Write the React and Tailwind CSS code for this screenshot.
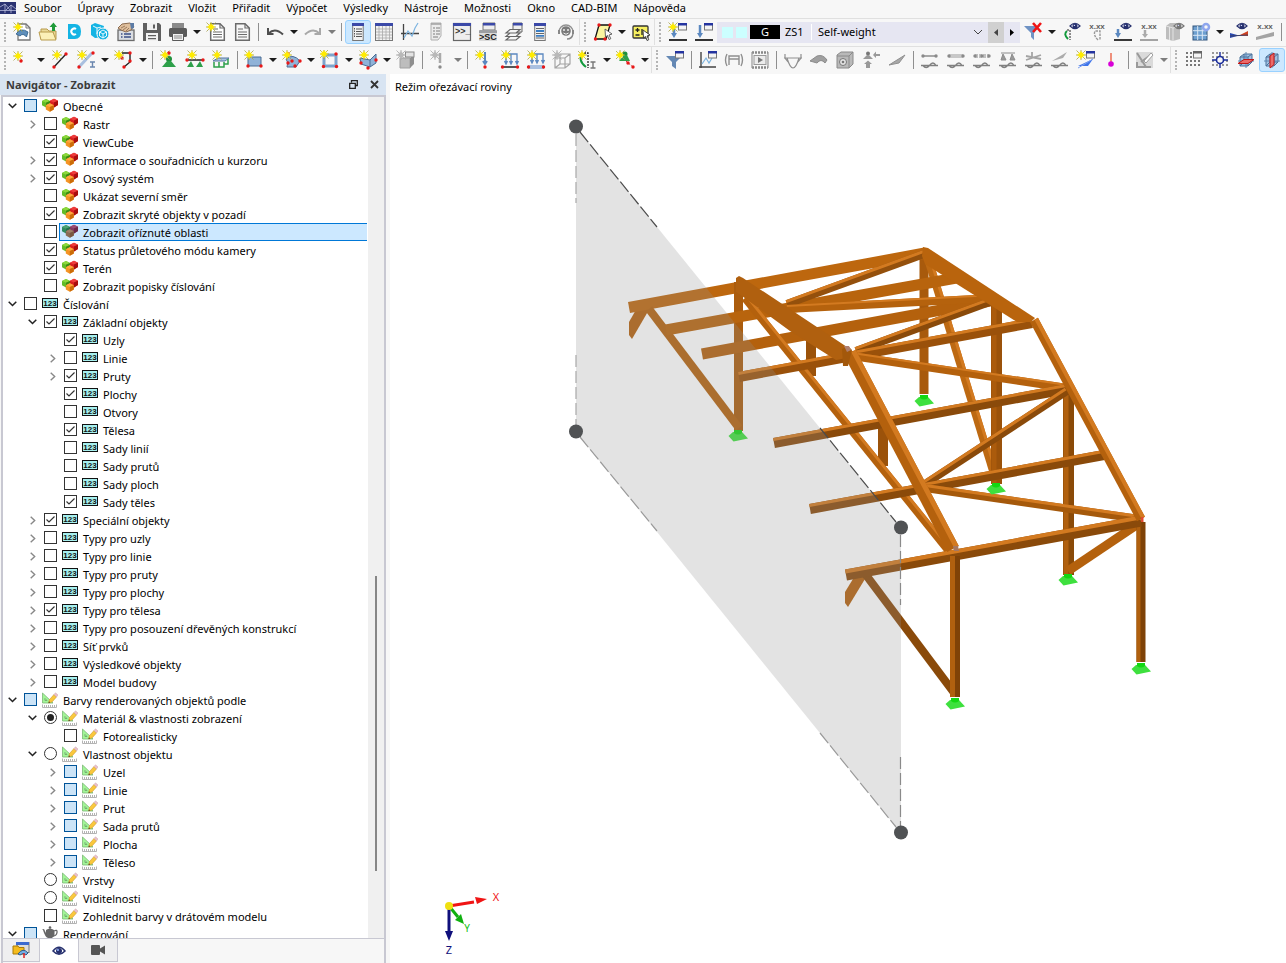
import { Fragment } from "react"
import clsx from "clsx"

const MENU = [
  "Soubor", "Úpravy", "Zobrazit", "Vložit", "Přiřadit", "Výpočet", "Výsledky",
  "Nástroje", "Možnosti", "Okno", "CAD-BIM", "Nápověda",
]

/* ---------- small parts shared by the toolbar icons ---------- */

function Star({ x = 5, y = 5, gray }) {
  return (
    <g transform={`translate(${x} ${y})`}>
      <path d="M-4.500 -4.500L4.500 4.500M4.500 -4.500L-4.500 4.500M0 -5V5M-5 0H5" stroke={gray ? "#a8a8a8" : "#a39f4a"} strokeWidth=".8" />
      <path
        d="M0 -4.500L1 -2L3 -3L2 -1L4.500 0L2 1L3 3L1 2L0 4.500L-1 2L-3 3L-2 1L-4.500 0L-2 -1L-3 -3L-1 -2Z"
        fill={gray ? "#b8b8b8" : "#ffec00"}
      />
    </g>
  )
}

function Dots({ at, gray }) {
  return at.map(([x, y]) => <circle key={`${x}-${y}`} cx={x} cy={y} r="1.700" fill={gray ? "#8a8a8a" : "#e81818"} />)
}

function Win({ x = 10, y = 1, gray }) {
  return (
    <g transform={`translate(${x} ${y})`}>
      <rect x=".5" y=".5" width="8" height="6.500" fill="#f4f4f4" stroke="#777" />
      <rect width="9" height="2.500" fill={gray ? "#666" : "#2434a0"} />
    </g>
  )
}

function Eye({ x = 13, y = 5, gray }) {
  return (
    <g transform={`translate(${x} ${y})`}>
      <path d="M-5 0Q0 -5.500 5 0Q0 5 -5 0Z" fill="#fff" stroke={gray ? "#777" : "#26306e"} strokeWidth="1.200" />
      <circle r="2.500" fill={gray ? "#777" : "#26306e"} />
      <circle cx="-.6" cy="-.6" r=".7" fill="#cfd6ff" />
    </g>
  )
}

const Xxx = () => (
  <text x="10" y="6.500" textAnchor="middle" fontFamily="Liberation Sans" fontSize="8" fontWeight="bold" fill="#606060">x.xx</text>
)

const Wave = () => (
  <path d="M1 15.500H18M3 15.500Q6 19.500 9.500 15.500Q13 10.500 16 15.500" fill="none" stroke="#808080" strokeWidth="1.400" />
)

const Page = ({ x = 3, fill = "#fff" }) => (
  <g transform={`translate(${x} 1)`}>
    <path d="M.7 .7H10L14.300 5V17.300H.7Z" fill={fill} stroke="#6b6b6b" strokeWidth="1.500" />
    <path d="M10 .7V5H14M3 6H8M3 9H12M3 11.500H12M3 14H12" fill="none" stroke="#6b6b6b" strokeWidth="1.200" />
  </g>
)

const Cross = ({ children }) => (
  <>
    <path d="M4 7L8 4H16V12L12 16H4Z" fill="#9fc0e2" stroke="#4a7199" />
    <path d="M4 7H12L16 4M12 7V16M8 4V12H16M8 12L4 16" fill="none" stroke="#4a7199" />
    <path d="M2 11H18M10 2V18" stroke="#5f88b3" />
    {children}
  </>
)

const ICONS = {
  newModel: (
    <>
      <path d="M6 2H14L18 6V18H6Z" fill="#fff" stroke="#777" strokeWidth="1.300" />
      <path d="M14 2V6H18" fill="none" stroke="#777" />
      <path d="M4 12Q9 5 16 10L14.500 15Q11 10.500 8 14Z" fill="#5f8fbb" stroke="#2d5d88" strokeWidth=".8" />
      <Star x={6} y={5} />
    </>
  ),
  open: (
    <>
      <path d="M3 7H9L11 9H18V17H3Z" fill="#e9d998" stroke="#b89b4c" />
      <path d="M1 10H15L18 18H3Z" fill="#fbf0b8" stroke="#b89b4c" />
      <path d="M14 9V5H11.500L15.500 .5L19 5H17V9Z" fill="#1f9b3a" />
    </>
  ),
  cloud: (
    <>
      <path d="M4 2H11Q17 2 17 9.500T11 17H4Z" fill="#14b4e4" />
      <path d="M12 7A3 3 0 1 0 12 12" fill="none" stroke="#fff" strokeWidth="2" />
    </>
  ),
  cloudCube: (
    <>
      <path d="M1 3L5 1L14 4L13 9L17 15L5 16L1 13Z" fill="#14b4e4" />
      <circle cx="13" cy="12" r="6" fill="#14b4e4" stroke="#f7f7f7" />
      <path d="M13 8L16.500 10V14L13 16L9.500 14V10ZM9.500 10L13 12L16.500 10M13 12V16M3 4L7 6V12M7 6L11 5" fill="none" stroke="#fff" strokeWidth=".9" />
    </>
  ),
  handDoc: (
    <>
      <rect x="2" y="8" width="16" height="10.500" fill="#dadde2" stroke="#6b6b6b" strokeWidth="1.300" />
      <path d="M5 12H6.500M8 12H15M5 15H6.500M8 15H15" stroke="#3d4f86" strokeWidth="1.500" />
      <path d="M2 6L6 2L14 1L18 4L15 8L10 10L5 8Z" fill="#dfbf9c" stroke="#8b6a4e" />
      <path d="M5 6L9 4M7 8L11 5M10 9L13 6" stroke="#8b6a4e" strokeWidth=".8" />
      <path d="M14 1L18 1V6L15 7Z" fill="#5d7ca6" />
    </>
  ),
  save: (
    <>
      <path d="M1 1H17L19 3V19H1Z" fill="#606060" />
      <path d="M5 1H15V8H5ZM4 11H16V19H4Z" fill="#f2f2f2" />
      <path d="M11 2.500H13V6.500H11ZM6 13H14V14.300H6ZM6 16H14V17.300H6Z" fill="#606060" />
    </>
  ),
  print: (
    <>
      <path d="M4 1H16V6H4Z" fill="#8a8a8a" />
      <rect x="1" y="6" width="18" height="9" rx="1.500" fill="#5a5a5a" />
      <path d="M4.500 11.500H15.500V18.500H4.500Z" fill="#f2f2f2" stroke="#5a5a5a" />
      <path d="M6 14H14M6 16H14" stroke="#888" />
    </>
  ),
  newDoc: (<><Page x={4} /><Star x={5} y={5} /></>),
  doc: <Page x={3} fill="#f7f7f7" />,
  undo: <path d="M3 6V12H8.500M3.500 11.500Q10 5 18 12.500" fill="none" stroke="#4f4f4f" strokeWidth="2" />,
  redo: <path d="M17 6V12H11.500M16.500 11.500Q10 5 2 12.500" fill="none" stroke="#a8a8a8" strokeWidth="2" />,
  navigator: (
    <>
      <rect x="4.700" y="2" width="10.500" height="16.500" fill="#f2f2f2" stroke="#777" />
      <rect x="4" y="1" width="12" height="3" fill="#3b49a8" />
      <path d="M8 7H14M8 9.500H14M8 12H14M8 14.500H14" stroke="#555" strokeWidth="1.200" />
      <path d="M6.500 6V16" stroke="#555" strokeDasharray="1.500 1" />
    </>
  ),
  table: (
    <>
      <rect x="1.500" y="1.500" width="17" height="17" fill="#f2f2f2" stroke="#777" />
      <path d="M5 4V18M8.500 4V18M12 4V18M15.500 4V18M2 7H18M2 10H18M2 13H18M2 16H18" stroke="#aaa" strokeWidth=".8" />
      <rect x="1" y="1" width="18" height="3" fill="#3b49a8" />
    </>
  ),
  chart: (
    <>
      <path d="M3.500 2V18M1 11.500H19" stroke="#444" strokeWidth="1.300" />
      <path d="M4 16L8 9L12 14L15 6L18 1" fill="none" stroke="#7db4e0" strokeWidth="1.200" />
    </>
  ),
  sheet: (
    <>
      <path d="M5 1H15V14L12 18H5Z" fill="#ececec" stroke="#b0b0b0" />
      <path d="M5 2H15M7 6H9M10 6H14M7 9H9M10 9H14M7 12H9M10 12H14M7 15H12" stroke="#a3a3a3" strokeWidth="1.400" />
    </>
  ),
  console: (
    <>
      <rect x="1.500" y="1.500" width="17" height="17" fill="#eee" stroke="#666" strokeWidth="1.200" />
      <rect x="1" y="1" width="18" height="3" fill="#3b49a8" />
      <text x="3" y="12" fontFamily="Liberation Sans" fontSize="9" fontWeight="bold" fill="#333">&gt;&gt;_</text>
    </>
  ),
  script: (
    <>
      <path d="M5 1H17V8H5Z" fill="#eee" stroke="#777" />
      <rect x="5" y="1" width="12" height="2.500" fill="#3b49a8" />
      <rect x="1" y="8" width="18" height="4" rx="1" fill="#9c9ea1" />
      <path d="M1 11H19V19H1Z" fill="#dadada" />
      <text x="10" y="18" textAnchor="middle" fontFamily="Liberation Sans" fontSize="9" fontWeight="bold" fill="#222">&gt;SC</text>
    </>
  ),
  layers: (
    <>
      <path d="M9 1H18V10H9Z" fill="#eee" stroke="#666" />
      <rect x="9" y="1" width="9.500" height="2.500" fill="#3b49a8" />
      <path d="M2 18L6 14.500H16L12 18ZM2 14.500L6 11H16L12 14.500ZM2 11L6 7.500H16L12 11Z" fill="#f5f5f5" stroke="#666" strokeWidth="1.200" />
    </>
  ),
  navBlue: (
    <>
      <rect x="4.700" y="2" width="10.500" height="16.500" fill="#f2f2f2" stroke="#777" />
      <rect x="4" y="1" width="12" height="3" fill="#3b49a8" />
      <path d="M6 6.500H14M6 11.500H14M6 16H14" stroke="#666" strokeWidth="1.200" />
      <path d="M6 9H14M6 13.800H14" stroke="#3b7ec4" strokeWidth="1.800" />
    </>
  ),
  headset: (
    <>
      <path d="M3 10A7 7 0 0 1 17 10" fill="none" stroke="#909090" strokeWidth="1.300" />
      <circle cx="10" cy="9" r="4.800" fill="#7a7a7a" />
      <circle cx="8" cy="8" r="1" fill="#eee" /><circle cx="12" cy="8" r="1" fill="#eee" />
      <path d="M7.500 11Q10 13.500 12.500 11" fill="none" stroke="#eee" />
      <path d="M2 8H4V12H2ZM16 8H18V12H16Z" fill="#888" />
      <path d="M17 12Q16 17 11 17" fill="none" stroke="#888" strokeWidth="1.400" />
    </>
  ),
  planeSelect: (
    <>
      <path d="M6 3H17L13 17H2Z" fill="#fbf6a0" stroke="#111" strokeWidth="1.300" />
      <Dots at={[[6, 3], [17, 3], [2.500, 17], [12, 17]]} />
      <path d="M12 7L12.500 15L14.500 13.500L16 17.500L17.800 16.700L16 13L19 12Z" fill="#fff" stroke="#555" strokeWidth=".9" />
    </>
  ),
  plusMinus: (
    <>
      <rect x="2" y="4" width="15" height="12" rx="1" fill="#f7f060" stroke="#333" strokeWidth="1.300" />
      <path d="M6.500 6V10M4.500 8H8.500M4.500 13H8.500M11 7V13" stroke="#222" strokeWidth="1.300" />
      <path d="M12 8L12.500 16L14.500 14.500L16 18.500L17.800 17.700L16 14L19 13Z" fill="#fff" stroke="#333" strokeWidth=".9" />
    </>
  ),
  newLoad: (<><path d="M6 3V13" stroke="#5b88c0" strokeWidth="2.500" /><path d="M3 11H9L6 16Z" fill="#5b88c0" /><path d="M1 18H19" stroke="#333" strokeWidth="2" /><Win /><Star x={5} y={5} /></>),
  load: (<><path d="M6 3V13" stroke="#5b88c0" strokeWidth="2.500" /><path d="M3 11H9L6 16Z" fill="#5b88c0" /><path d="M1 18H19" stroke="#333" strokeWidth="2" /><Win /></>),
  filterX: (<><path d="M1 4H17L11 11V18L8 15V11Z" fill="#6f93c4" /><path d="M10 1L18 10M18 1L10 10" stroke="#f01414" strokeWidth="2.600" /></>),
  memberEye: (<><path d="M7 17Q2 12 6 9" fill="none" stroke="#129a3c" strokeWidth="2" /><path d="M6 8H9V18" fill="none" stroke="#222" strokeDasharray="2 1" /><Eye x={14} y={4} /></>),
  memberX: (<><path d="M11 18Q6 13 8 9H13V18" fill="none" stroke="#999" strokeWidth="1.400" strokeDasharray="2.500 1" /><Xxx /></>),
  loadEye: (<><path d="M5 7V12" stroke="#5b88c0" strokeWidth="2.500" /><path d="M2 11H8L5 16Z" fill="#5b88c0" /><path d="M1 18H19" stroke="#222" strokeWidth="1.800" /><Eye x={13} y={4} /></>),
  loadX: (<><path d="M6 8V13" stroke="#aaa" strokeWidth="2.500" /><path d="M3 12H9L6 16Z" fill="#aaa" /><path d="M1 18H19" stroke="#999" strokeWidth="1.800" /><Xxx /></>),
  boxEye: (<><path d="M1 4L5 1H12L15 4V17L8 19L1 17Z" fill="#bdbdbd" /><path d="M1 4L8 6V19M8 6L15 4M4.500 5V18" fill="none" stroke="#e4e4e4" /><Eye x={14} y={4} gray /></>),
  gridSet: (<><rect x="2" y="4" width="14" height="14" fill="#6ea0d0" stroke="#33567e" /><path d="M6.700 4V18M11.300 4V18M2 8.700H16M2 13.300H16" stroke="#dbe8f5" /><circle cx="15" cy="5" r="3" fill="#f7f7f7" stroke="#8ea6ee" strokeWidth="2.500" /></>),
  wedgeEye: (<><path d="M1 11V16L10 13.500Z" fill="#2848b0" /><path d="M10 13.500L19 9V14Z" fill="#d04020" /><path d="M1 14L19 13" stroke="#3a3f66" /><Eye x={13} y={4} /></>),
  wedgeX: (<><path d="M1 18V15L19 10V14Z" fill="#a4a4a4" /><Xxx /></>),

  // second bar
  node: (<><Star x={6} y={6} /><Dots at={[[9, 11]]} /></>),
  line: (<><path d="M4 17L16 4" stroke="#222" strokeWidth="1.300" /><Dots at={[[4, 17], [16, 4]]} /><Star x={7} y={5} /></>),
  member: (<><path d="M3 17L16 3" stroke="#a9c0e0" strokeWidth="3" /><Dots at={[[3, 17], [17, 3]]} /><path d="M14 12H19M16.500 12V17M14 17H19" stroke="#6a86ae" strokeWidth="1.400" /><Star x={6} y={5} /></>),
  polyline: (<><path d="M8 3H16V12L10 17" fill="none" stroke="#222" strokeWidth="1.400" /><Dots at={[[8, 8], [16, 3], [16, 11], [10, 17]]} /><Star x={5} y={5} /></>),
  nodeSupport: (<><circle cx="10" cy="9" r="3" fill="#1f8f3a" /><path d="M8 11H12L17 17H3Z" fill="#2da04a" /><Star x={6} y={5} /><Dots at={[[10, 3]]} /></>),
  lineSupport: (<><path d="M2 10H18" stroke="#222" strokeWidth="1.500" /><path d="M6 11L9 17H2ZM15 11L18 17H11Z" fill="#2da04a" /><Dots at={[[2, 10], [18, 10]]} /><Star x={7} y={5} /></>),
  surfSupport: (<><path d="M2 11L7 8H18L14 11Z" fill="#a9c4e4" stroke="#5577a0" /><path d="M3 12V17H13V12M8 12V17M17 9V14H13" fill="none" stroke="#2da04a" strokeWidth="1.500" /><Star x={6} y={5} /></>),
  surface: (<><path d="M4 7H17V16H4Z" fill="#8fb2d8" stroke="#4a6c94" /><Dots at={[[4, 16], [17, 16]]} /><Star x={5} y={5} /></>),
  shell: (<><path d="M4 9Q11 3 18 11L14 17H5Q7 12 4 9Z" fill="#8fb2d8" stroke="#4a6c94" /><Dots at={[[6, 4], [18, 11], [6, 13], [13, 16], [10, 11]]} /><Star x={5} y={5} /></>),
  opening: (<><rect x="4" y="5" width="12" height="11" fill="#f7f7f7" stroke="#7ea4cc" strokeWidth="3" /><Dots at={[[16, 4], [3.500, 16.500], [16.500, 16.500]]} /><Star x={4} y={4} /></>),
  solid: (<><path d="M2 8L12 10L18 4V13L12 17L3 14Z" fill="#8fb2d8" stroke="#4a6c94" /><path d="M12 10V17" stroke="#4a6c94" /><Dots at={[[3, 13], [10, 18], [18, 10]]} /><Star x={6} y={5} /></>),
  graySolid: (<><path d="M4 8H14V18H4Z" fill="#bdbdbd" stroke="#a0a0a0" /><path d="M14 8L18 5V14L14 18Z" fill="#8f8f8f" /><rect x="9.500" y="2" width="8.500" height="5" fill="#e2e2e2" stroke="#888" /><Star x={5} y={5} gray /></>),
  grayLoad: (<><path d="M11 3V13" stroke="#aaa" strokeWidth="2.500" /><Dots at={[[11, 17]]} gray /><Star x={6} y={5} gray /></>),
  nodeLoad: (<><path d="M11 2V14M9 11L11 14L13 11" fill="none" stroke="#5b88c0" strokeWidth="2" /><Dots at={[[11, 17]]} /><Star x={6} y={5} /></>),
  lineLoad: (<><path d="M3 4H17V14M11 4V14M6 4V14M4.500 11L6 14L7.500 11M9.500 11L11 14L12.500 11M15.500 11L17 14L18.500 11" fill="none" stroke="#5b88c0" strokeWidth="1.300" /><path d="M2 17H18" stroke="#222" strokeWidth="1.500" /><Dots at={[[2.500, 17], [17.500, 17]]} /><Star x={6} y={5} /></>),
  memberLoad: (<><path d="M3 4H17V13M11 4V13M6 4V13M4.500 10L6 13L7.500 10M9.500 10L11 13L12.500 10M15.500 10L17 13L18.500 10" fill="none" stroke="#5b88c0" strokeWidth="1.300" /><path d="M2 17H18" stroke="#a9c0e0" strokeWidth="4" /><Dots at={[[2.500, 17], [17.500, 17]]} /><Star x={6} y={5} /></>),
  grayCube: (<><path d="M3 8L8 4H18V14L13 18H3ZM3 8H13L18 4M13 8V18M8 4V14M8 14H18M8 14L3 18" fill="none" stroke="#a4a4a4" strokeWidth="1.200" /><Star x={5} y={5} gray /></>),
  imperfection: (<><path d="M5 3Q-1 10 8 17" fill="none" stroke="#129a3c" strokeWidth="2" /><path d="M6 3H10V18" fill="none" stroke="#222" strokeWidth="1.300" strokeDasharray="2 1" /><path d="M12.500 12H17.500M15 12V18M12.500 18H17.500" stroke="#777" strokeWidth="1.400" /><Star x={4} y={5} /></>),
  support2: (<><circle cx="9" cy="4" r="2.500" fill="#1f8f3a" /><path d="M8 5H11L14 11H3Z" fill="#2da04a" /><path d="M10 11L17 17" stroke="#c33" strokeDasharray="2 1.500" /><Dots at={[[17, 17], [12, 13]]} /><Star x={4} y={5} /></>),
  funnel: (<><path d="M1 6H17L11 12V19L7 16V12Z" fill="#6488b4" /><Win x={10} y={1} /></>),
  chartWin: (<><path d="M3 2V18M1 17H18" stroke="#444" strokeWidth="1.400" /><path d="M4 14L8 8L11 13L14 8" fill="none" stroke="#7db4e0" strokeWidth="1.200" /><Win /></>),
  bracket: <path d="M5 15V6H15V15M5 9H15M3 4Q0 10 3 16M17 4Q20 10 17 16" fill="none" stroke="#8f8f8f" strokeWidth="1.400" />,
  film: (<><path d="M2 2.500H18M2 17.500H18" stroke="#888" strokeWidth="2.500" strokeDasharray="2 1" /><path d="M2 2V18M18 2V18" stroke="#999" strokeWidth="1.200" /><rect x="4" y="5.500" width="12" height="9" fill="#ececec" stroke="#999" /><path d="M8 7V13L13 10Z" fill="#777" /></>),
  moment: <path d="M1 8H19M2 4V8L5 12M18 4V8L15 12M4 8Q7 18 10 18T16 8" fill="none" stroke="#8f8f8f" strokeWidth="1.200" />,
  deform: <path d="M1 11L8 6Q14 4 18 10L16 13Q12 8 8 13Z" fill="#a0a0a0" stroke="#8c8c8c" />,
  dice: (<><path d="M2 5L6 2H18V14L14 18H2Z" fill="#b9b9b9" stroke="#8a8a8a" /><path d="M2 6H14V18M14 6L18 2" fill="none" stroke="#8a8a8a" /><circle cx="8" cy="12" r="3.500" fill="#e4e4e4" stroke="#777" /><circle cx="8" cy="12" r="1.300" fill="#777" /></>),
  reactions: (<><circle cx="7" cy="3.500" r="2" fill="#777" /><path d="M2 9L6 5H8L12 9ZM5 18V14H3L7 10.500L11 14H9V18ZM19 4H15V1.500L12 5L15 8V6H19Z" fill="#999" /></>),
  wedge: <path d="M2 15L18 5L12 13Z" fill="#a8a8a8" stroke="#909090" />,
  res1: (<><path d="M2 6H17" stroke="#8c8c8c" strokeWidth="1.500" /><Dots at={[[3, 6], [16, 6]]} gray /><Wave /></>),
  res2: (<><path d="M3 6H17" stroke="#c8c8c8" strokeWidth="4" /><Dots at={[[3, 6], [17, 6]]} gray /><Wave /></>),
  res3: (<><path d="M3 6H17" stroke="#c0c0c0" strokeWidth="4" strokeDasharray="3 1" /><Dots at={[[3, 6], [10, 6], [17, 6]]} gray /><Wave /></>),
  res4: (<><path d="M3 3H17M5 4L8 10H3ZM14 4L17 10H12Z" fill="#999" stroke="#8c8c8c" /><Wave /></>),
  res5: (<><path d="M2 6L17 9M2 10L17 5M8 2V8" stroke="#a4a4a4" strokeWidth="1.800" /><Wave /></>),
  res6: (<><path d="M2 11L17 2L13 8Z" fill="#acacac" /><Wave /></>),
  newResult: (<><path d="M2 16L17 9L12 16Z" fill="#3f74ea" /><path d="M2 18L17 9" stroke="#7da0ee" /><Win /><Star x={5} y={5} /></>),
  pin: (<><path d="M9 3V12" stroke="#e84a28" strokeWidth="1.200" /><circle cx="9" cy="14" r="2.800" fill="#d800d8" /></>),
  brush: (<><rect x="1" y="2" width="17" height="16" fill="#dadada" /><path d="M2 3L11 17M6 12L17 4M2 12V17H16" fill="none" stroke="#9a9a9a" strokeWidth="2" /><path d="M9 11L16 3L18 5L11 13Z" fill="#fff" stroke="#a0a0a0" /></>),
  gridWin: (<><path d="M3 2V18M7 2V18M11 2V18M15 2V18" stroke="#777" strokeWidth="2" strokeDasharray="2 2" /><Win x={9} y={1} gray /></>),
  snap: (<><path d="M3 2V18M7 2V18M13 2V18M17 2V18" stroke="#999" strokeWidth="2" strokeDasharray="2 2" /><path d="M10 2V18M2 10H18" stroke="#1a2c9a" strokeWidth="1.400" /><circle cx="10" cy="10" r="3.500" fill="#f7f7f7" stroke="#1a2c9a" strokeWidth="1.600" /></>),
  clipH: <Cross><path d="M2 13.500L8 9.500H18L12 13.500Z" fill="#ea6a6a" stroke="#c01818" /></Cross>,
  clipV: <Cross><path d="M8 6L12 3V14.500L8 18Z" fill="#ea6a6a" stroke="#c01818" /></Cross>,
}

/* ---------- toolbars: "|" separator, "v" drop arrow, ":" grip ---------- */

const BAR_1A = [":", "newModel", "open", "cloud", "cloudCube", "handDoc", "save", "print", "v", "newDoc", "doc", "|",
  "undo", "v", "redo", "V", "|", "*navigator", "table", "chart", "sheet", "console", "script", "layers", "navBlue", "headset",
  ":", "planeSelect", "v", "plusMinus", ":", "newLoad", "load"]
const BAR_1B = ["filterX", "v", "memberEye", "memberX", "loadEye", "loadX", "boxEye", "gridSet", "v", "wedgeEye", "wedgeX", "|"]
const BAR_2 = [":", "node", "v", "line", "member", "v", "polyline", "v", "|", "nodeSupport", "lineSupport", "surfSupport", "|",
  "surface", "v", "shell", "v", "opening", "v", "solid", "v", "graySolid", "|", "grayLoad", "V", "|",
  "nodeLoad", "lineLoad", "memberLoad", "grayCube", "imperfection", "v", "support2", "v", ":",
  "funnel", "|", "chartWin", "bracket", "film", "|", "moment", "deform", "dice", "reactions", "wedge", "|",
  "res1", "res2", "res3", "res4", "res5", "res6", "newResult", "pin", "|", "brush", "V", ":",
  "gridWin", "snap", "clipH", "*clipV"]

function ToolItem({ item }) {
  if (item === ":") {
    return (
      <div className="flex h-full w-[11px] shrink-0 items-center justify-center border-l border-[#e0e0e0] first:w-[9px] first:border-l-0">
        <div className="h-5 border-l-2 border-dotted border-[#b4b4b4]" />
      </div>
    )
  }
  if (item === "|") {
    return (
      <div className="flex w-[7px] shrink-0 justify-center">
        <div className="h-[18px] w-px bg-[#8f8f8f]" />
      </div>
    )
  }
  if (item === "v" || item === "V") {
    return (
      <button aria-label="Další možnosti" className="flex h-6 w-3 shrink-0 items-center justify-center">
        <svg width="8" height="4" viewBox="0 0 8 4"><path d="M0 0H8L4 4Z" fill={item === "v" ? "#1c1c1c" : "#7d7d7d"} /></svg>
      </button>
    )
  }
  const active = item[0] === "*"
  const name = active ? item.slice(1) : item
  return (
    <button
      aria-label={name}
      className={clsx(
        "flex h-6 w-[26px] shrink-0 items-center justify-center rounded-[3px] border",
        active ? "border-[#99d1ff] bg-[#cce8ff]" : "border-transparent"
      )}
    >
      <svg width="20" height="20" viewBox="0 0 20 20" className="shrink-0">{ICONS[name]}</svg>
    </button>
  )
}

const Items = ({ list }) => list.map((item, i) => <ToolItem key={i} item={item} />)

function LoadCase() {
  return (
    <div className="flex h-[21px] shrink-0">
      <button className="flex w-[271px] items-center bg-[#e6e6f2] pl-[5px] text-left">
        <span className="h-[11px] w-[11px] bg-[#ccffff]" />
        <span className="ml-[3px] h-[11px] w-[11px] bg-[#ccffff]" />
        <span className="ml-[3px] h-[14px] w-[30px] bg-black text-center leading-[14px] text-white">G</span>
        <span className="ml-[5px] w-[26px]">ZS1</span>
        <span className="h-4 w-px bg-white" />
        <span className="ml-[6px] flex-1">Self-weight</span>
        <svg width="10" height="6" viewBox="0 0 10 6" className="mr-[5px]"><path d="M1 1L5 5L9 1" fill="none" stroke="#444" /></svg>
      </button>
      <button aria-label="Předchozí" className="flex w-4 items-center justify-center bg-[#d0d0d0]">
        <svg width="4" height="7" viewBox="0 0 4 7"><path d="M4 0V7L0 3.500Z" fill="#444" /></svg>
      </button>
      <button aria-label="Další" className="flex w-4 items-center justify-center bg-[#e6e6f2]">
        <svg width="4" height="7" viewBox="0 0 4 7"><path d="M0 0V7L4 3.500Z" fill="#000" /></svg>
      </button>
    </div>
  )
}

/* ---------- navigator ---------- */

// level, arrow (o = open, c = closed), control (x = ticked, n = empty, p = partial, r/R = radio), icon, label
const TREE = [
  [0, "o", "p", "cubes", "Obecné"],
  [1, "c", "n", "cubes", "Rastr"],
  [1, "", "x", "cubes", "ViewCube"],
  [1, "c", "x", "cubes", "Informace o souřadnicích u kurzoru"],
  [1, "c", "x", "cubes", "Osový systém"],
  [1, "", "n", "cubes", "Ukázat severní směr"],
  [1, "", "x", "cubes", "Zobrazit skryté objekty v pozadí"],
  [1, "", "n", "cubes", "Zobrazit oříznuté oblasti", true],
  [1, "", "x", "cubes", "Status průletového módu kamery"],
  [1, "", "x", "cubes", "Terén"],
  [1, "", "n", "cubes", "Zobrazit popisky číslování"],
  [0, "o", "n", "num", "Číslování"],
  [1, "o", "x", "num", "Základní objekty"],
  [2, "", "x", "num", "Uzly"],
  [2, "c", "n", "num", "Linie"],
  [2, "c", "x", "num", "Pruty"],
  [2, "", "x", "num", "Plochy"],
  [2, "", "n", "num", "Otvory"],
  [2, "", "x", "num", "Tělesa"],
  [2, "", "n", "num", "Sady linií"],
  [2, "", "n", "num", "Sady prutů"],
  [2, "", "n", "num", "Sady ploch"],
  [2, "", "x", "num", "Sady těles"],
  [1, "c", "x", "num", "Speciální objekty"],
  [1, "c", "n", "num", "Typy pro uzly"],
  [1, "c", "n", "num", "Typy pro linie"],
  [1, "c", "n", "num", "Typy pro pruty"],
  [1, "c", "n", "num", "Typy pro plochy"],
  [1, "c", "x", "num", "Typy pro tělesa"],
  [1, "c", "n", "num", "Typy pro posouzení dřevěných konstrukcí"],
  [1, "c", "n", "num", "Síť prvků"],
  [1, "c", "n", "num", "Výsledkové objekty"],
  [1, "c", "n", "num", "Model budovy"],
  [0, "o", "p", "ruler", "Barvy renderovaných objektů podle"],
  [1, "o", "R", "ruler", "Materiál & vlastnosti zobrazení"],
  [2, "", "n", "ruler", "Fotorealisticky"],
  [1, "o", "r", "ruler", "Vlastnost objektu"],
  [2, "c", "p", "ruler", "Uzel"],
  [2, "c", "p", "ruler", "Linie"],
  [2, "c", "p", "ruler", "Prut"],
  [2, "c", "p", "ruler", "Sada prutů"],
  [2, "c", "p", "ruler", "Plocha"],
  [2, "c", "p", "ruler", "Těleso"],
  [1, "", "r", "ruler", "Vrstvy"],
  [1, "", "r", "ruler", "Viditelnosti"],
  [1, "", "n", "ruler", "Zohlednit barvy v drátovém modelu"],
  [0, "o", "p", "teapot", "Renderování"],
]

const INDENT = ["w-0", "w-5", "w-10"]

function Cube({ x, y, c }) {
  return (
    <g transform={`translate(${x} ${y})`}>
      <path d="M0 -4.200L4 -2.200V2L0 4.400L-4 2V-2.200Z" fill={c[1]} />
      <path d="M0 -4.200L4 -2.200L0 -.4L-4 -2.200Z" fill={c[0]} />
      <path d="M0 -.4L4 -2.200V2L0 4.400Z" fill={c[2]} />
    </g>
  )
}

function TreeIcon({ kind, selected }) {
  if (kind === "num") {
    return (
      <svg width="16" height="12" viewBox="0 0 16 12" className="mt-px shrink-0">
        <rect x=".5" y="1.500" width="15" height="9" fill="#a6f0ee" stroke="#111" />
        <text x="8" y="9" textAnchor="middle" fontFamily="Liberation Sans" fontWeight="bold" fontSize="8" fill="#111">123</text>
      </svg>
    )
  }
  if (kind === "cubes") {
    return (
      <svg width="16" height="14" viewBox="0 0 16 14" className="shrink-0">
        <Cube x={12} y={5} c={selected ? ["#9a4c74", "#843a60", "#6c2848"] : ["#ee3c3c", "#d82020", "#a80e0e"]} />
        <Cube x={4} y={5.200} c={selected ? ["#4ba273", "#2f8a5c", "#256f4c"] : ["#8cd83c", "#62bc28", "#3a8c12"]} />
        <Cube x={7.800} y={9.400} c={selected ? ["#a08068", "#8c6c54", "#785840"] : ["#ffa640", "#f49424", "#cc6c08"]} />
      </svg>
    )
  }
  if (kind === "ruler") {
    return (
      <svg width="16" height="16" viewBox="0 0 16 16" className="shrink-0">
        <path d="M.5 1V11H11Z" fill="#a2f598" stroke="#7ab874" strokeWidth=".8" />
        <path d="M3 6.500V8.500H5Z" fill="#e8fbe4" stroke="#5a9a58" strokeWidth=".7" />
        <path d="M6.500 11L7.500 7.500L12 2.500L14.500 5L10 10Z" fill="#fac83c" stroke="#c08c20" strokeWidth=".5" />
        <path d="M12 2.500L13.500 .8L16 3L14.500 5Z" fill="#eec0cc" stroke="#b99" strokeWidth=".4" />
        <path d="M6.500 11L7 9.300L8.200 10.400Z" fill="#333" />
        <path d="M.5 12.500V15.500H14.500V12.500M2.500 13V15M4.500 13V15M6.500 13V15M8.500 13V15M10.500 13V15M12.500 13V15" fill="none" stroke="#b4b4b4" />
      </svg>
    )
  }
  return (
    <svg width="16" height="14" viewBox="0 0 16 14" className="shrink-0">
      <path d="M4 4Q8 1 12 4Q14 9 10 12H6Q3 11 1 4L0 3.500L2 3L4 7Z" fill="#666" />
      <circle cx="8" cy="1.500" r="1.300" fill="#666" />
      <path d="M12 5Q15.500 3 15 6.500T11 10" fill="none" stroke="#666" strokeWidth="1.300" />
    </svg>
  )
}

function Control({ kind }) {
  if (kind === "r" || kind === "R") {
    return (
      <span className="relative mt-[2px] h-[13px] w-[13px] shrink-0">
        <input type="radio" name="barvy" defaultChecked={kind === "R"} className="peer block h-[13px] w-[13px] appearance-none rounded-full border border-[#333] bg-white" />
        <span className="pointer-events-none absolute inset-[3px] hidden rounded-full bg-[#222] peer-checked:block" />
      </span>
    )
  }
  return (
    <span className="relative mt-[2px] h-[13px] w-[13px] shrink-0">
      <input
        type="checkbox"
        defaultChecked={kind === "x"}
        className={clsx(
          "peer block h-[13px] w-[13px] appearance-none border",
          kind === "p" ? "border-[#005499] bg-[#cce4f7]" : "border-[#333] bg-white"
        )}
      />
      <svg viewBox="0 0 13 13" className="pointer-events-none absolute inset-0 hidden h-[13px] w-[13px] peer-checked:block">
        <path d="M2.500 6.500L5 9L10.500 3.500" fill="none" stroke="#333" strokeWidth="1.200" />
      </svg>
    </span>
  )
}

function TreeRow({ row }) {
  const [level, arrow, control, icon, label, selected] = row
  return (
    <li className="flex h-[18px] items-stretch">
      <span className={clsx("shrink-0", INDENT[level])} />
      {arrow ? (
        <button aria-label={label} className="mr-[2px] flex w-[19px] shrink-0 items-center justify-center">
          {arrow === "o" ? (
            <svg width="9" height="6" viewBox="0 0 9 6"><path d="M.7 .7L4.500 4.500L8.300 .7" fill="none" stroke="#222" strokeWidth="1.500" /></svg>
          ) : (
            <svg width="6" height="9" viewBox="0 0 6 9"><path d="M.7 .7L4.700 4.500L.7 8.300" fill="none" stroke="#888" strokeWidth="1.400" /></svg>
          )}
        </button>
      ) : <span className="mr-[2px] w-[19px] shrink-0" />}
      <label className="flex flex-1 items-start">
        <Control kind={control} />
        <span
          className={clsx(
            "ml-[2px] flex h-[18px] flex-1 items-start gap-[5px] border border-r-0 pl-[2px]",
            selected ? "border-[#0078d7] bg-[#cce8ff]" : "border-transparent"
          )}
        >
          <TreeIcon kind={icon} selected={selected} />
          <span className="whitespace-nowrap leading-[18px]">{label}</span>
        </span>
      </label>
    </li>
  )
}

function Navigator() {
  return (
    <aside className="flex w-[386px] shrink-0 flex-col">
      <header className="flex h-[21px] shrink-0 items-center bg-[#d8e4f2] pl-[6px] pr-[7px]">
        <h2 className="flex-1 text-[11px] font-bold text-[#3c3c3c]">Navigátor - Zobrazit</h2>
        <button aria-label="Plovoucí" className="mr-3">
          <svg width="9" height="9" viewBox="0 0 9 9"><path d="M2.500 2.500V.7H8.300V5.500H6.500M.7 3.300H6.300V8.300H.7Z" fill="none" stroke="#222" strokeWidth="1.300" /></svg>
        </button>
        <button aria-label="Zavřít">
          <svg width="9" height="9" viewBox="0 0 9 9"><path d="M1 1L8 8M8 1L1 8" stroke="#333" strokeWidth="1.800" /></svg>
        </button>
      </header>
      <div className="ml-px flex min-h-0 flex-1 border-2 border-[#c8c8d2] border-b-0 bg-white">
        <ul className="min-w-0 flex-1 overflow-hidden">
          {TREE.map((row, i) => <TreeRow key={i} row={row} />)}
        </ul>
        <div className="relative ml-px w-4 bg-[#f0f0f0]">
          <div className="absolute left-[7px] top-[57%] h-[35%] w-0.5 bg-[#868686]" />
        </div>
      </div>
      <footer className="ml-px flex h-[25px] shrink-0 border-x-2 border-t border-[#c8c8d2]">
        <button aria-label="Data" className="mb-px flex w-[37px] items-center justify-center border-b border-r border-[#c8c8d2] bg-[#efeff0]">
          <svg width="18" height="18" viewBox="0 0 18 18">
            <rect x="5" y="1.500" width="12" height="10" fill="#ddd" stroke="#777" /><rect x="4" y="1" width="13" height="3" fill="#3b6ad0" />
            <path d="M1 5H6L7 6.500H12V13H1Z" fill="#f5bc1c" stroke="#a87a08" />
            <path d="M6 13Q11 6 16 12L14 14Q11 11 8 14Z" fill="#74aee4" stroke="#2c5a8c" /><path d="M12 12V17" stroke="#e02020" strokeWidth="1.500" />
          </svg>
        </button>
        <button aria-label="Zobrazit" className="flex w-[38px] items-center justify-center bg-white">
          <svg width="14" height="12" viewBox="-7 -6 14 12">
            <path d="M-6 0Q0 -7.500 6 0Q0 6.500 -6 0Z" fill="#fff" stroke="#26306e" strokeWidth="1.500" /><circle r="3" fill="#26306e" /><circle cx="-1" cy="-1" r="1" fill="#8fb2ff" />
          </svg>
        </button>
        <button aria-label="Pohledy" className="mb-px flex w-[40px] items-center justify-center border-x border-b border-[#c8c8d2] bg-[#efeff0]">
          <svg width="14" height="10" viewBox="0 0 14 10"><path d="M1 0H8Q9 0 9 1V3.500L14 .5V9.500L9 6.500V9Q9 10 8 10H1Q0 10 0 9V1Q0 0 1 0Z" fill="#555" /></svg>
        </button>
      </footer>
    </aside>
  )
}

/* ---------- 3D model ---------- */

const MID = "#b4610d"
const DARK = "#8a4a0a"
const LIGHT = "#d37a20"

// x1, y1, x2, y2, width, body colour, width of the lit edge; drawn back to front
const BEAMS = [
  [924, 256, 924, 394, 9, "#a85a0c", 0],
  [929, 262, 994, 474, 8, "#bd6912", 3],
  [996.5, 300, 996.5, 484, 11, "#9b520a", 0],
  [994, 305, 994, 484, 5, "#ab5b0c", 0],
  [629, 307.5, 925, 253, 11, "#bd670e", 0],
  [738.5, 282, 738.5, 431, 9, "#ab5c0d", 0],
  [649, 309, 739, 428, 8, "#b4620d", 0],
  [666, 330, 962, 277, 11, "#b8640d", 0],
  [702, 354, 990, 301, 11, "#b4610d", 0],
  [787, 304, 924, 254, 8, "#94500c", 3],
  [787, 309, 994, 298, 8, "#b5620d", 2],
  [811, 333, 811, 376, 10, "#9b520a", 0],
  [883, 425, 883, 466, 10, "#9b520a", 0],
  [745, 298, 948, 550, 8, "#b4610d", 3],
  [1068.5, 390, 1068.5, 575, 11, "#8a4a08", 0],
  [1066, 392, 1066, 575, 5, "#b0600f", 0],
  [856, 351, 995, 300, 8, DARK, 3],
  [739, 377, 1032, 323, 10, "#9a510a", 3],
  [852, 356, 1067, 388, 8, "#b4610d", 2],
  [774, 443, 1067, 389, 10, DARK, 3],
  [922, 486, 1067, 391, 8, DARK, 3],
  [810, 509, 1104, 455, 10, DARK, 3],
  [925, 488, 1139, 519, 8, "#a5590b", 3],
  [1068, 571, 1138, 524, 9, MID, 0],
  [1141, 522, 1141, 662, 9, "#7f4207", 0],
  [1138.5, 522, 1138.5, 662, 4, "#b0600f", 0],
  [863, 571, 955, 694, 8, DARK, 0],
  [846, 575, 1141, 521, 11, DARK, 4],
  [955, 556, 955, 697, 10, "#7f4207", 0],
  [952.5, 556, 952.5, 697, 5, "#b0600f", 0],
  [1034, 320, 1141, 519, 9, MID, 4],
  [850, 353, 953, 549, 13, MID, 5],
]

const SUPPORTS = [[738, 436], [924, 401], [996, 489], [1068, 580], [1141, 669], [955, 704]]
const HANDLES = [[576, 126.5], [901, 527.5], [576, 431.5], [901, 832.5]]

function Beam({ beam }) {
  const [x1, y1, x2, y2, w, fill, lit] = beam
  const len = Math.hypot(x2 - x1, y2 - y1)
  const off = w / 2 - lit / 2
  const nx = ((y2 - y1) / len) * off
  const ny = (-(x2 - x1) / len) * off
  return (
    <>
      <line x1={x1} y1={y1} x2={x2} y2={y2} stroke={fill} strokeWidth={w} />
      {lit > 0 && <line x1={x1 + nx} y1={y1 + ny} x2={x2 + nx} y2={y2 + ny} stroke={LIGHT} strokeWidth={lit} />}
    </>
  )
}

function Model() {
  return (
    <svg viewBox="390 74 896 889" preserveAspectRatio="xMinYMin meet" className="block h-full w-full">
      <path d="M629 322L637 308H650L632 339L629 335Z" fill={MID} />
      <path d="M845 592L856 574H868L848 607L845 603Z" fill={MID} />
      {BEAMS.map((beam, i) => (
        <Fragment key={i}>
          <Beam beam={beam} />
        </Fragment>
      ))}
      {SUPPORTS.map(([x, y]) => (
        <g key={x} transform={`translate(${x} ${y})`}>
          <path d="M-5 -4L-9.500 0L-4.500 5.500L10 2.500L4 -4Z" fill="#3ee03e" />
          <path d="M-4 -6H4V-3Q0 0 -4 -3Z" fill="#12d812" />
        </g>
      ))}
      <path d="M736 278L739 276L743 278L847 347V358L836 360L790 331L742 296L736 292Z" fill="#b0600f" />
      <path d="M923 247L928 248L1035 318L1031 322H1017L925 264L922 256Z" fill="#b9640d" />
      <path d="M842 349L848 346L852 350L848 366L843 366Z" fill="#a3580b" />
      <path d="M844 346L849 346L851 350L847 352Z" fill="#b08070" />
      <path d="M953 546L958 546L959 551L954 551Z" fill="#a77860" />
      <path d="M1141 517H1143.500V522H1141Z" fill="#e04a30" />

      <path d="M576 127L901 528V833L576 432Z" fill="#949494" fillOpacity=".26" />
      <g fill="none" strokeWidth="1.200">
        <path d="M580 132L657 227M820 428L896 522" stroke="#4c4c4c" strokeDasharray="13 3" />
        <path d="M580 437L657 531M820 733L896 827" stroke="#9a9a9a" strokeDasharray="13 3" />
        <path d="M576 134V203M576 355V425" stroke="#a8a8a8" strokeDasharray="12 4" />
        <path d="M900.500 535V605M900.500 757V826" stroke="#8a8a8a" strokeDasharray="12 4" />
      </g>
      {HANDLES.map(([x, y]) => (
        <circle key={`${x}-${y}`} cx={x} cy={y} r="7" fill="#505254" />
      ))}

      <g fontFamily="Noto Sans" fontSize="11" textAnchor="middle">
        <path d="M449 906L474 902" stroke="#f01414" strokeWidth="3" />
        <path d="M475 897L487 899L477 904Z" fill="#f01414" />
        <path d="M449 906L458 917" stroke="#10b010" strokeWidth="3" />
        <path d="M461 914L464 924L455 920Z" fill="#10b010" />
        <path d="M449 906V933" stroke="#10107c" strokeWidth="3" />
        <path d="M445 931H453L449 941Z" fill="#10107c" />
        <circle cx="449" cy="906" r="4" fill="#f0e010" />
        <text x="496" y="901" fill="#f01414">X</text>
        <text x="467" y="932" fontSize="10" fill="#10c010">Y</text>
        <text x="449" y="954" fill="#10107c">Z</text>
      </g>
    </svg>
  )
}

export default function App() {
  return (
    <div className="flex h-screen flex-col overflow-hidden bg-[#f7f7f7] font-['Noto_Sans',sans-serif] text-[11px] leading-4 text-black">
      <nav className="flex h-[18px] shrink-0 items-start gap-4">
        <svg width="16" height="12" viewBox="0 0 16 12" className="-mr-2 mt-[2px]">
          <rect width="16" height="12" fill="#2b3372" />
          <path d="M0 8.500H16M0 5L5 2L10 8M5 2V11M11 3V11M11 3L16 7M11 3L6 8" fill="none" stroke="#c8cce8" strokeWidth=".7" />
        </svg>
        {MENU.map((item) => <button key={item}>{item}</button>)}
      </nav>
      <div className="flex h-7 shrink-0 items-center border-t border-[#e0e0e0] pb-px">
        <Items list={BAR_1A} />
        <LoadCase />
        <Items list={BAR_1B} />
      </div>
      <div className="flex h-7 shrink-0 items-center border-t border-[#e0e0e0] pb-px">
        <Items list={BAR_2} />
      </div>
      <div className="flex min-h-0 flex-1 gap-1">
        <Navigator />
        <main className="relative min-w-0 flex-1 bg-white">
          <Model />
          <p className="absolute left-[5px] top-[5px]">Režim ořezávací roviny</p>
        </main>
      </div>
    </div>
  )
}
